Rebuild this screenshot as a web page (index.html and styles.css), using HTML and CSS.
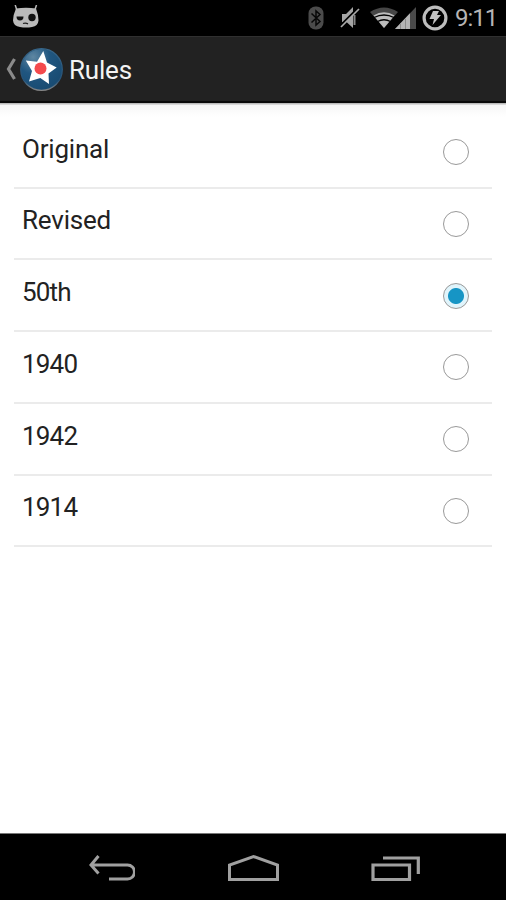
FILE: index.html
```html
<!DOCTYPE html>
<html lang="en">
<head>
<meta charset="utf-8">
<title>Rules</title>
<link rel="stylesheet" href="styles.css">
</head>
<body>
<div class="screen">
  <header class="status">
    <svg width="28" height="26" viewBox="0 0 28 26">
      <path d="M3.200 0 5 5.500M24.500 0 22.700 5.500" stroke="#b8b8b8" stroke-width="1.500"/>
      <path d="M4 3.500Q14 2 24 3.500Q26.500 10 26.500 15.500Q26 21 20 22Q14 23 8 22Q1.500 21 1 15.500Q1 10 4 3.500Z" fill="#bababa"/>
      <path d="M4.500 11.500h7q0 4-3.500 4t-3.500-4Z" fill="#111"/>
      <circle cx="20" cy="12.500" r="3.700" fill="#111"/>
      <path d="M11 18.500q2.500-1 5 .3" stroke="#222" stroke-width="1.300" fill="none"/>
    </svg>
    <div class="tray">
      <svg width="16" height="24" viewBox="0 0 16 24">
        <rect x=".5" y=".5" width="15" height="23" rx="7" fill="#4b4b4b"/>
        <path d="M3.500 7.500 12 15.500 8 19V5L12 8.500 3.500 16.500" fill="none" stroke="#080808" stroke-width="1.500"/>
      </svg>
      <svg class="mute" width="20" height="22" viewBox="0 0 20 22">
        <path d="M2 7h4L13 0v21L6.500 15H2Z" fill="#a5a5a5"/>
        <path d="M14.500 8v10" stroke="#888" stroke-width="2"/>
        <path d="M0 19 18 1" stroke="#000" stroke-width="2"/>
        <path d="M1 20 19 2" stroke="#aaa" stroke-width="1.700"/>
      </svg>
      <svg class="wifi" width="28" height="22" viewBox="0 0 28 22">
        <path d="M0 5Q14-4 28 5L14 21Z" fill="#464646"/>
        <path d="M3.500 8.500Q14 2 24.500 8.500L14 21Z" fill="#bcbcbc"/>
        <path d="M4 10.500Q14 5.500 24 10.500M7.500 14.500Q14 11 20.500 14.500" fill="none" stroke="#000" stroke-width="1.300"/>
      </svg>
      <svg class="cell" width="21" height="23" viewBox="0 0 21 23">
        <path d="M0 22 21 0V22Z" fill="#4a4a4a"/>
        <path d="M0 22 15 6.300V22Z" fill="#b4b4b4"/>
        <path d="M5.500 17v5M10.500 12v10" stroke="#8a8a8a"/>
      </svg>
      <svg class="battery" width="26" height="26" viewBox="0 0 26 26">
        <circle cx="13" cy="13" r="10.900" fill="none" stroke="#bdbdbd" stroke-width="3.200"/>
        <path d="M11 6h6l-2 4h4l-8.500 10 1.500-6H7.500Z" fill="#c2c2c2"/>
      </svg>
      <span class="clock">9:11</span>
    </div>
  </header>
  <div class="bar">
    <svg width="11" height="24" viewBox="0 0 11 24">
      <path d="M9.500 2 3.500 12 9.500 22" fill="none" stroke="#8b8b8b" stroke-width="3.200"/>
    </svg>
    <svg class="logo" width="44" height="46" viewBox="0 0 44 46">
      <defs>
        <radialGradient id="blue" cx=".3" cy=".2" r=".8">
          <stop offset="0" stop-color="#5f87a2"/><stop offset=".5" stop-color="#205680"/><stop offset="1" stop-color="#194c73"/>
        </radialGradient>
        <linearGradient id="rim" x2="0" y2="1">
          <stop offset="0" stop-color="#36668a"/><stop offset=".75" stop-color="#285378"/><stop offset="1" stop-color="#858585"/>
        </linearGradient>
      </defs>
      <circle cx="22.500" cy="23.500" r="20.800" fill="url(#blue)" stroke="url(#rim)" stroke-width="1.200"/>
      <path d="M24.300 5 28 16.500 37.700 21.500 29.500 27.500 30 38 21.300 32 10 35.500 13 25 6.800 14.500 18 15.800Z" fill="#fff"/>
      <circle cx="21.500" cy="22.500" r="6" fill="#f44a4d"/>
    </svg>
    <h1 class="title">Rules</h1>
  </div>
  <main class="list">
    <label class="row"><span>Original</span><i class="radio"></i></label>
    <label class="row"><span>Revised</span><i class="radio"></i></label>
    <label class="row"><span class="num">50th</span><i class="radio on"></i></label>
    <label class="row"><span class="num">1940</span><i class="radio"></i></label>
    <label class="row"><span class="num">1942</span><i class="radio"></i></label>
    <label class="row"><span class="num">1914</span><i class="radio"></i></label>
  </main>
  <nav class="nav">
    <svg width="48" height="28" viewBox="0 0 48 28" fill="none" stroke="#a0a0a0" stroke-width="3">
      <path d="M11.500 2 4 11 11.500 19.500M4 11H40.500a7 7 0 0 1 0 14H22"/>
    </svg>
    <svg width="54" height="28" viewBox="0 0 54 28" fill="none" stroke="#a0a0a0" stroke-width="3">
      <path d="M3.500 25.500V11L27.500 2.500 51.500 11V25.500Z"/>
    </svg>
    <svg width="50" height="28" viewBox="0 0 50 28" fill="none" stroke="#a0a0a0" stroke-width="3.200">
      <path d="M2 11H38.500V25.500H2ZM12 4H47.300V20"/>
    </svg>
  </nav>
</div>
</body>
</html>
```
FILE: styles.css
```css
* { box-sizing: border-box; }
body { margin: 0; font-family: Roboto, "Liberation Sans", sans-serif; }
svg { display: block; flex: none; }
.screen { width: 506px; height: 900px; display: flex; flex-direction: column; background: #fff; }
.status { height: 36px; flex: none; background: #000; display: flex; justify-content: space-between; align-items: center; padding: 0 8px 0 12px; }
.tray { display: flex; align-items: center; height: 36px; }
.mute { margin-left: 16px; }
.wifi { margin-left: 10px; }
.cell { margin-left: -3px; }
.battery { margin-left: 6px; margin-bottom: 1px; }
.clock { width: 43px; margin-left: 7px; font-size: 24px; line-height: 36px; color: #b5b5b5; white-space: nowrap; letter-spacing: -1px; }
.bar { height: 67px; flex: none; background: #222; border-top: 1px solid #303030; border-bottom: 2px solid #0a0a0a; display: flex; align-items: center; padding-left: 5px; }
.logo { margin-left: 3px; }
.title { margin: 2px 0 0 6px; font-size: 26px; font-weight: 400; line-height: 32px; letter-spacing: -.2px; color: #f3f3f3; }
.list { flex: 1; padding: 13.800px 14px 0; background: linear-gradient(#bbb 0 1px, #f7f7f7 2px, #fff 14px); }
.row { height: 71.750px; display: flex; justify-content: space-between; border-bottom: 2px solid #ebebeb; padding: 15.800px 23px 0 8px; font-size: 26px; line-height: 32px; letter-spacing: -.2px; color: #222; }
.num { letter-spacing: -.8px; }
.radio { width: 26px; height: 26px; margin-top: 6.500px; border: 1.500px solid #999; border-radius: 50%; background: #fff; }
.on { background: radial-gradient(circle, #1695c5 0 7.500px, #e0f4fb 8.500px 11px); }
.nav { height: 67px; flex: none; background: #000; border-top: 1px solid #777; display: flex; justify-content: space-between; padding: 20px 85px 0 87px; }
```
